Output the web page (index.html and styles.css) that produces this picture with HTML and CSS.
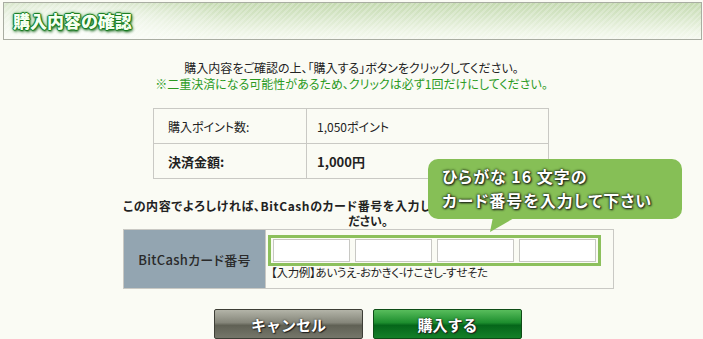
FILE: index.html
```html
<!DOCTYPE html>
<html lang="ja">
<head>
    <meta charset="UTF-8">
    <title>購入内容の確認</title>
    <link rel="stylesheet" href="styles.css">
</head>
<body>
    <div class="page-head">
        <h1>購入内容の確認</h1>
    </div>

    <div class="intro">
        <p>購入内容をご確認の上、「購入する」ボタンをクリックしてください。</p>
        <p class="warn">※二重決済になる可能性があるため、クリックは必ず1回だけにしてください。</p>
    </div>

    <table class="summary">
        <tr>
            <th>購入ポイント数:</th>
            <td>1,050ポイント</td>
        </tr>
        <tr class="total">
            <th>決済金額:</th>
            <td>1,000円</td>
        </tr>
    </table>

    <div class="entry">
        <p class="lead"><span class="lead-first">この内容でよろしければ、BitCashのカード番号を入力して「購入する」ボタンを押してく</span>ださい。</p>

        <table class="card">
            <tr>
                <th>BitCashカード番号</th>
                <td>
                    <div class="card-inputs">
                        <input type="text" maxlength="4">
                        <input type="text" maxlength="4">
                        <input type="text" maxlength="4">
                        <input type="text" maxlength="4">
                    </div>
                    <p class="example">【入力例】あいうえ-おかきく-けこさし-すせそた</p>
                </td>
            </tr>
        </table>

        <!-- 吹き出し -->
        <div class="bubble">ひらがな 16 文字の<br>カード番号を入力して下さい</div>

        <div class="buttons">
            <button class="btn btn-cancel">キャンセル</button>
            <button class="btn btn-buy">購入する</button>
        </div>
    </div>
</body>
</html>
```

FILE: styles.css
```css
body {
    margin: 0;
    background-color: #fafbf4;
    color: #222;
    font-family: "Noto Sans CJK JP", "Liberation Sans", sans-serif;
    font-size: 12px;
    font-feature-settings: "palt";
}

p {
    margin: 0;
}

.page-head {
    height: 36px;
    margin: 2px 1px 0 3px;
    border: 1px solid #a9ada2;
    background:
        radial-gradient(ellipse 160px 40px at 70px 20px, rgba(255,255,255,0.95), rgba(255,255,255,0)),
        repeating-linear-gradient(135deg, rgba(255,255,255,0.22) 0 2px, rgba(255,255,255,0) 2px 4px),
        linear-gradient(#c4dab0, #eef5e6 80%, #f6f9f0);
}

.page-head h1 {
    margin: 0;
    padding: 7px 0 0 9px;
    font-size: 17px;
    line-height: 22px;
    font-weight: 900;
    color: #f4fff0;
    text-shadow:
        0 0 1px #137a1c,
        1px 0 1px #137a1c,
        -1px 0 1px #137a1c,
        0 1px 1px #137a1c,
        0 -1px 1px #137a1c,
        0 0 4px #2f9a34,
        1px 2px 3px #0b5410;
}

.intro {
    padding-top: 20px;
    text-align: center;
    line-height: 16px;
}

.intro .warn {
    color: #2a9a1e;
}

.summary {
    width: 396px;
    margin: 16px 0 0 153px;
    border-collapse: collapse;
}

.summary th,
.summary td {
    height: 34px;
    padding: 0 10px;
    border: 1px solid #c9c9c4;
    text-align: left;
    font-weight: normal;
}

.summary th {
    width: 128px;
    padding-left: 14px;
}

.summary .total th,
.summary .total td {
    font-size: 13px;
    font-weight: bold;
}

.entry {
    position: relative;
    width: 490px;
    margin: 19px 0 0 123px;
}

.lead {
    text-align: center;
    font-weight: bold;
    line-height: 15px;
}

.lead-first {
    display: block;
    overflow: hidden;
    white-space: nowrap;
    text-align: left;
    letter-spacing: 0.6px;
}

.card {
    width: 491px;
    height: 60px;
    margin-top: 1px;
    border-collapse: collapse;
}

.card th,
.card td {
    border: 1px solid #c9c9c4;
}

.card th {
    width: 141px;
    padding: 0;
    background-color: #93a5b1;
    color: #2a2a2a;
    font-weight: 500;
    font-size: 13px;
    letter-spacing: 0.3px;
}

.card td {
    padding: 5px 0 3px 2px;
    vertical-align: top;
}

.card-inputs {
    display: inline-flex;
    gap: 5px;
    padding: 1px 2px;
    border: 3px solid #8cc05c;
}

.card-inputs input {
    width: 77px;
    height: 23px;
    box-sizing: border-box;
    border: 1px solid #c8c8c4;
    background: #fff;
    margin: 0;
    padding: 0 3px;
}

.example {
    margin: 0 0 0 3px;
    font-size: 11.5px;
    line-height: 12px;
    letter-spacing: -0.3px;
}

.bubble {
    position: absolute;
    left: 305px;
    top: -39px;
    width: 240px;
    height: 55px;
    padding: 5px 0 0 14px;
    border-radius: 10px;
    background-color: #86bf56;
    color: #fff;
    font-size: 16px;
    font-weight: bold;
    line-height: 24px;
    letter-spacing: 1px;
    text-shadow: 0 0 2px #1a2610, 0 0 3px #1f2d14, 1px 1px 2px #222;
}

.bubble::after {
    content: "";
    position: absolute;
    left: 62px;
    top: 58px;
    width: 26px;
    height: 15px;
    background-color: #86bf56;
    clip-path: polygon(3px 0, 26px 0, 0 100%);
}

.buttons {
    display: flex;
    justify-content: center;
    gap: 10px;
    margin-top: 20px;
}

.btn {
    width: 149px;
    height: 30px;
    border: 1px solid #3d3e36;
    border-radius: 2px;
    color: #fff;
    font-family: "Noto Sans CJK JP", sans-serif;
    font-size: 15px;
    font-weight: bold;
    text-shadow: 0 0 2px #1a1a1a, 1px 1px 1px #222;
    cursor: pointer;
}

.btn-cancel {
    background: linear-gradient(#b3b4a8, #85867a 45%, #606155 55%, #75766a);
}

.btn-buy {
    border-color: #0e4d16;
    background: linear-gradient(#58bd5c, #1d8e2e 45%, #05661a 55%, #148028);
}
```
